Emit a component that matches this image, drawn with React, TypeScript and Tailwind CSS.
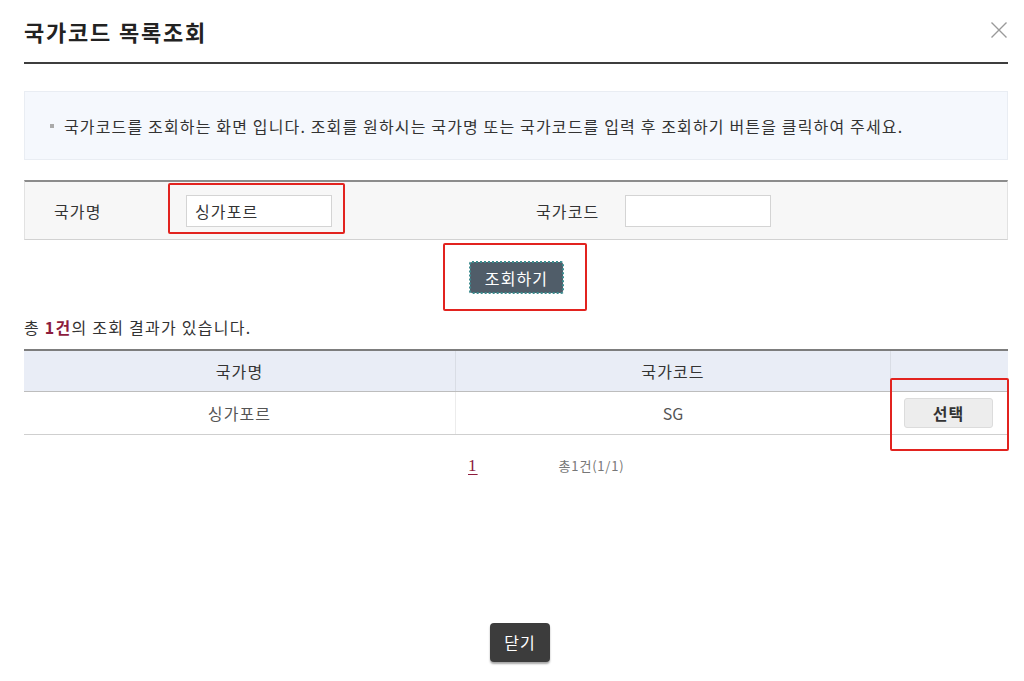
import React from 'react';

const FONT = '"Noto Sans CJK KR", "Noto Sans", sans-serif';

function RedMark({ className }: { className: string }) {
	return <div className={`absolute border-2 border-[#e2231f] rounded-[2px] pointer-events-none ${className}`}></div>;
}

export default function App() {
	return (
		<div className="w-[1024px] h-[681px] bg-white text-[#333] overflow-hidden tracking-[1.1px]" style={{ fontFamily: FONT }}>
			{/* 헤더 */}
			<div className="pl-6 pr-4">
				<div className="h-[62px] flex items-center justify-between">
					<h1 className="text-[22px] font-bold text-[#222] leading-none tracking-[1.8px]">국가코드 목록조회</h1>
					<button className="w-[18px] h-[18px] text-[#9a9a9a] -mt-[2px]">
						<svg viewBox="0 0 18 18" width="18" height="18" fill="none" stroke="currentColor" strokeWidth="1.4">
							<path d="M1.5 1.5 L16.5 16.5 M16.5 1.5 L1.5 16.5" />
						</svg>
					</button>
				</div>
				<div className="h-[2px] bg-[#3d3d3d]"></div>

				{/* 안내 */}
				<div className="mt-[27px] h-[69px] bg-[#f5f8fd] border border-[#e9edf3] flex items-center pl-[25px]">
					<span className="w-[4px] h-[4px] bg-[#aaa] mr-[10px]"></span>
					<p className="text-[16px] leading-none text-[#333] tracking-[1.15px]">
						국가코드를 조회하는 화면 입니다. 조회를 원하시는 국가명 또는 국가코드를 입력 후 조회하기 버튼을 클릭하여 주세요.
					</p>
				</div>

				{/* 검색 */}
				<div className="mt-[20px] h-[60px] bg-[#f7f7f7] border-t-2 border-t-[#8c8c8c] border-b border-b-[#d2d2d2] border-x border-x-[#e2e2e2] flex items-center pl-[29px]">
					<span className="w-[132px] text-[16px]">국가명</span>
					<div className="relative">
						<div className="w-[146px] h-[32px] bg-white border border-[#d4d4d4] flex items-center px-[8px] text-[16px] text-[#333]">싱가포르</div>
						<RedMark className="-left-[18px] -top-[12px] w-[177px] h-[51px]" />
					</div>
					<span className="ml-[204px] text-[16px]">국가코드</span>
					<div className="ml-[26px] w-[146px] h-[32px] bg-white border border-[#d4d4d4]"></div>
				</div>

				{/* 조회 버튼 */}
				<div className="flex justify-center mt-[22px] pl-[1px]">
					<div className="relative">
						<button className="w-[93px] h-[31px] bg-[#505d69] text-white text-[16px] rounded-[2px] outline-2 outline-dotted outline-[#3d8c8f] -outline-offset-1">조회하기</button>
						<RedMark className="-left-[27px] -top-[19px] w-[144px] h-[68px]" />
					</div>
				</div>

				{/* 결과 */}
				<p className="mt-[26px] text-[16px] leading-none tracking-[1.25px]">
					총 <b className="text-[#8d1c3d]">1건</b>의 조회 결과가 있습니다.
				</p>

				<div className="mt-[14px] border-t-2 border-t-[#7d7d7d]">
					<div className="flex h-[41px] bg-[#e9edf6] border-b border-b-[#bdbdbd] text-[16px]">
						<div className="w-[432px] flex items-center justify-center border-r border-r-[#d9dde5]">국가명</div>
						<div className="w-[435px] flex items-center justify-center border-r border-r-[#d9dde5]">국가코드</div>
						<div className="flex-1"></div>
					</div>
					<div className="flex h-[43px] border-b border-b-[#cfcfcf] text-[16px] text-[#555]">
						<div className="w-[432px] flex items-center justify-center border-r border-r-[#ececec]">싱가포르</div>
						<div className="w-[435px] flex items-center justify-center border-r border-r-[#ececec] tracking-normal">SG</div>
						<div className="flex-1 flex items-center pl-[13px]">
							<div className="relative">
								<button className="w-[89px] h-[30px] bg-[#ededed] border border-[#dcdcdc] rounded-[3px] text-[16px] font-bold text-[#333]">선택</button>
								<RedMark className="-left-[14px] -top-[20px] w-[119px] h-[73px]" />
							</div>
						</div>
					</div>
				</div>

				{/* 페이징 */}
				<div className="mt-[18px] flex items-center pl-[444px]">
					<span className="text-[17px] text-[#8d1c3d] underline underline-offset-[3px]" style={{ fontFamily: '"Liberation Serif", serif' }}>1</span>
					<span className="ml-[81px] text-[13px] text-[#777] tracking-[0.8px]">총1건(1/1)</span>
				</div>

				{/* 닫기 */}
				<div className="flex justify-center mt-[144px] pl-[8px]">
					<button className="w-[60px] h-[39px] bg-[#3c3c3c] text-white text-[16px] rounded-[4px] shadow-[0_2px_2px_rgba(0,0,0,0.35)]">닫기</button>
				</div>
			</div>
		</div>
	);
}
